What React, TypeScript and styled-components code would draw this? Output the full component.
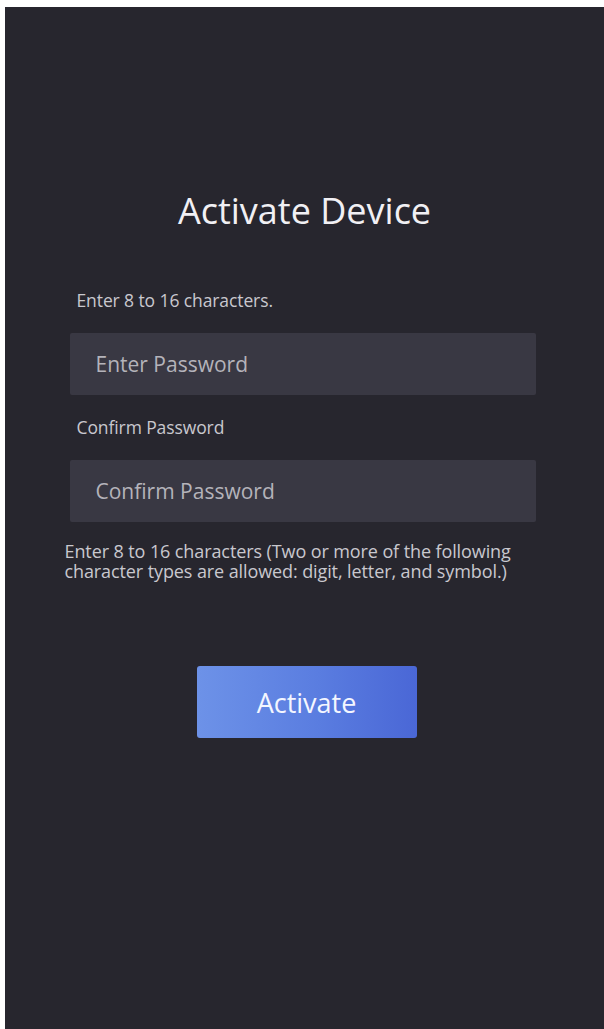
import React from 'react';
import styled, { createGlobalStyle } from 'styled-components';

const GlobalStyle = createGlobalStyle`
  html, body {
    margin: 0;
    padding: 0;
    background: #ffffff;
  }
  body {
    font-family: "Open Sans", "Noto Sans", sans-serif;
  }
`;

const Screen = styled.div`
  box-sizing: border-box;
  margin: 7px 0 0 5px;
  height: 1022px;
  background: #27262e;
  display: flex;
  flex-direction: column;
  align-items: center;
  padding-top: 182px;
`;

const Title = styled.h1`
  margin: 0;
  font-size: 36px;
  font-weight: 400;
  color: #f1f0f4;
  line-height: 44px;
`;

const Form = styled.div`
  width: 466px;
  margin: 57px 0 0 -4px;
  display: flex;
  flex-direction: column;
`;

const Label = styled.div<{ $gap?: number }>`
  margin: ${({ $gap = 0 }) => $gap}px 0 0 7px;
  font-size: 17.5px;
  line-height: 20px;
  color: #c9c8ce;
  letter-spacing: -0.1px;
`;

const Field = styled.input`
  box-sizing: border-box;
  width: 100%;
  height: 62px;
  margin: 23px 0 0;
  padding: 0 26px;
  border: none;
  border-radius: 2px;
  outline: none;
  background: #393843;
  font-family: "Open Sans", "Noto Sans", sans-serif;
  font-size: 21px;
  color: #e6e5ea;

  &::placeholder {
    color: #b4b3ba;
  }
`;

const Hint = styled.p`
  margin: 19px 0 0 -5px;
  width: 490px;
  font-size: 18px;
  line-height: 20px;
  color: #c9c8ce;
  letter-spacing: -0.1px;
`;

const ActivateButton = styled.button`
  margin: 85px 0 0 4px;
  width: 220px;
  height: 72px;
  border: none;
  border-radius: 3px;
  background: linear-gradient(90deg, #6d92e8 0%, #5a7de0 55%, #4a67d6 100%);
  color: #f4f6ff;
  font-family: "Open Sans", "Noto Sans", sans-serif;
  font-size: 27px;
  font-weight: 400;
  cursor: pointer;
`;

export default function App() {
  return (
    <>
      <GlobalStyle />
      <Screen>
        <Title>Activate Device</Title>
        <Form>
          <Label>Enter 8 to 16 characters.</Label>
          <Field type="password" placeholder="Enter Password" />
          <Label $gap={22}>Confirm Password</Label>
          <Field type="password" placeholder="Confirm Password" />
          <Hint>
            Enter 8 to 16 characters (Two or more of the following
            <br />
            character types are allowed: digit, letter, and symbol.)
          </Hint>
        </Form>
        <ActivateButton>Activate</ActivateButton>
      </Screen>
    </>
  );
}
